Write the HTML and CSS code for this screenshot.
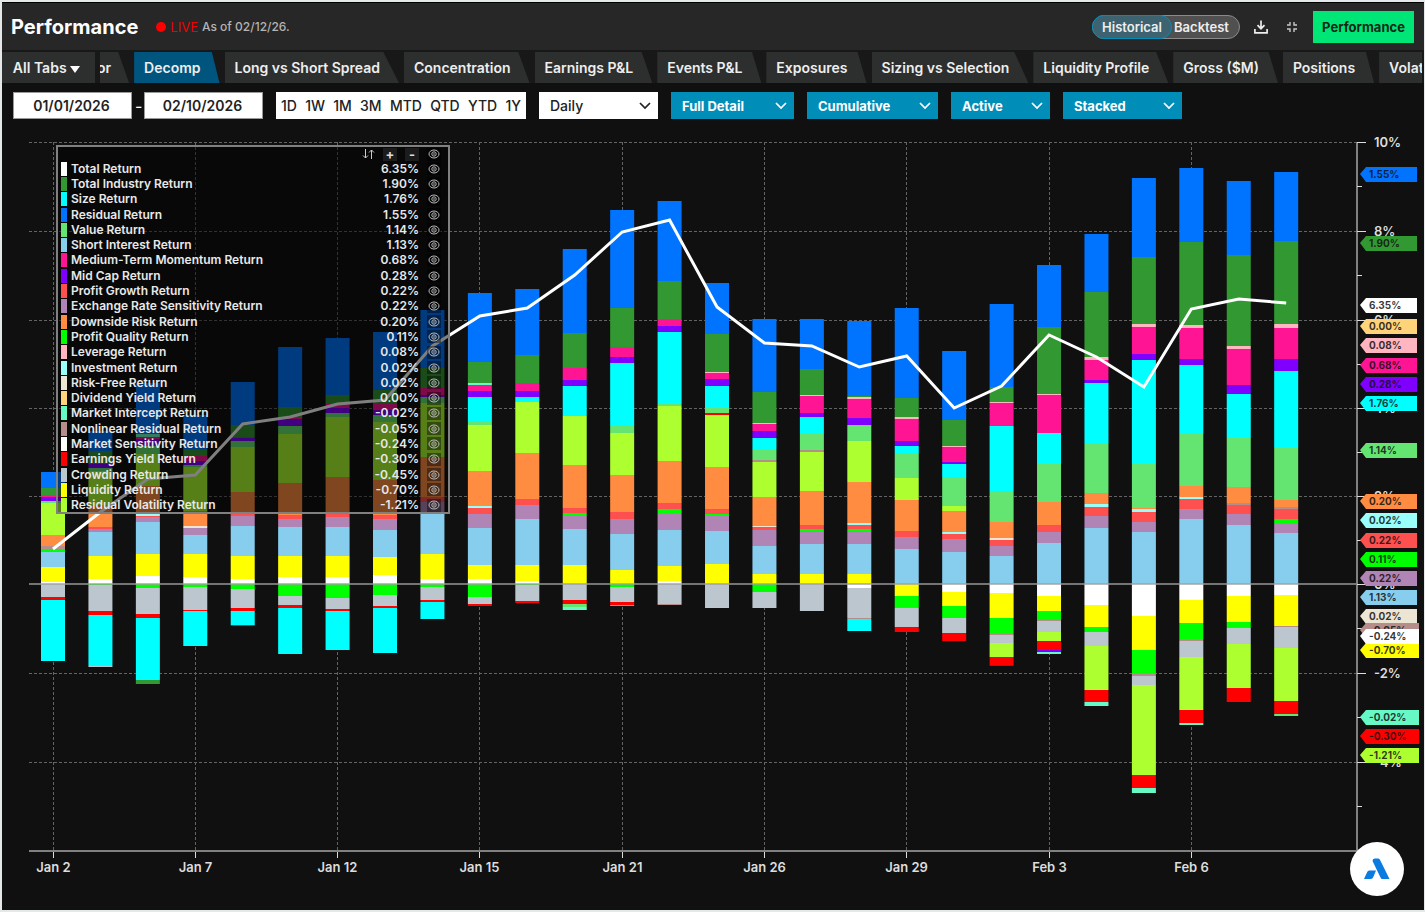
FILE: index.html
```html
<!DOCTYPE html>
<html lang="en">
<head>
    <meta charset="UTF-8">
    <meta name="viewport" content="width=device-width, initial-scale=1.0">
    <title>Performance</title>
    <link rel="stylesheet" href="styles.css">
</head>
<body>
    <div class="app">
        <header class="header">
            <h1>Performance</h1>
            <span class="live-dot"></span>
            <span class="live">LIVE</span>
            <span class="as-of">As of 02/12/26.</span>
            <div class="header-right">
                <div class="toggle">
                    <button class="toggle-on">Historical</button>
                    <button class="toggle-off">Backtest</button>
                </div>
                <button class="icon-btn" aria-label="Download">
                    <svg width="14" height="14" viewBox="0 0 14 14" fill="none" stroke="#eee" stroke-width="1.7"><path d="M7 0.500V8.500M3.500 5.200L7 8.700L10.500 5.200M0.900 9V12.800H13.100V9"/></svg>
                </button>
                <button class="icon-btn" aria-label="Collapse">
                    <svg width="12" height="12" viewBox="0 0 12 12" fill="none" stroke="#c8c8c8" stroke-width="1.400"><path d="M4 1V4H1M8 1V4H11M4 11V8H1M8 11V8H11"/></svg>
                </button>
                <button class="perf-btn">Performance</button>
            </div>
        </header>

        <nav class="tabs">
            <button class="all-tabs">All Tabs <svg width="10" height="7" viewBox="0 0 10 7"><path d="M0 0H10L5 7Z" fill="#fff"/></svg></button>
            <div class="tab-strip">
                <button class="tab tab-cut">or</button>
                <button class="tab active">Decomp</button>
                <button class="tab">Long vs Short Spread</button>
                <button class="tab">Concentration</button>
                <button class="tab">Earnings P&amp;L</button>
                <button class="tab">Events P&amp;L</button>
                <button class="tab">Exposures</button>
                <button class="tab">Sizing vs Selection</button>
                <button class="tab">Liquidity Profile</button>
                <button class="tab">Gross ($M)</button>
                <button class="tab">Positions</button>
                <button class="tab">Volatility</button>
            </div>
        </nav>

        <div class="controls">
            <div class="dates">
                <input type="text" class="date" value="01/01/2026" aria-label="Start date">
                <span>-</span>
                <input type="text" class="date" value="02/10/2026" aria-label="End date">
            </div>
            <div class="ranges">
                <button>1D</button>
                <button>1W</button>
                <button>1M</button>
                <button>3M</button>
                <button>MTD</button>
                <button>QTD</button>
                <button>YTD</button>
                <button>1Y</button>
            </div>
            <div class="select select-white">
                <select aria-label="Frequency"><option>Daily</option></select>
                <svg width="12" height="8" viewBox="0 0 12 8"><path d="M1 1L6 6L11 1"/></svg>
            </div>
            <div class="select select-detail">
                <select aria-label="Detail"><option>Full Detail</option></select>
                <svg width="12" height="8" viewBox="0 0 12 8"><path d="M1 1L6 6L11 1"/></svg>
            </div>
            <div class="select select-mode">
                <select aria-label="Mode"><option>Cumulative</option></select>
                <svg width="12" height="8" viewBox="0 0 12 8"><path d="M1 1L6 6L11 1"/></svg>
            </div>
            <div class="select select-active">
                <select aria-label="Return type"><option>Active</option></select>
                <svg width="12" height="8" viewBox="0 0 12 8"><path d="M1 1L6 6L11 1"/></svg>
            </div>
            <div class="select select-stack">
                <select aria-label="Chart type"><option>Stacked</option></select>
                <svg width="12" height="8" viewBox="0 0 12 8"><path d="M1 1L6 6L11 1"/></svg>
            </div>
        </div>

        <main class="chart">
            <svg id="plot" class="plot" viewBox="2 126 1422 784"></svg>
            <div class="legend">
                <table>
                    <thead>
                        <tr>
                            <th></th>
                            <th></th>
                            <th class="tools">
                                <button aria-label="Sort"><svg width="13" height="10" viewBox="0 0 13 10" fill="none" stroke="#ccc"><path d="M3.500 0V9M1 6.500L3.500 9L6 6.500M9.500 10V1M7 3.500L9.500 1L12 3.500"/></svg></button>
                                <button class="boxed">+</button>
                                <button class="boxed">-</button>
                            </th>
                            <th class="eye"><button aria-label="Toggle all"><svg><use href="#eye"/></svg></button></th>
                        </tr>
                    </thead>
                    <tbody id="legendRows"></tbody>
                </table>
            </div>
            <button class="fab" aria-label="Assistant">
                <svg width="28" height="22" viewBox="0 0 28 22"><path d="M10 4C9 1.500 10.500 0.500 12.500 0.500H14.500C16 0.500 16.700 1 17.200 2.200L26.500 21H20C18.500 21 18 20.500 17.500 19.500L10 4Z" fill="#0a7be0"/><path d="M1 21L4 14.500C4.600 13 5.500 12.500 7 12.500H13L10.500 18.500C9.800 20.300 9 21 7.500 21Z" fill="#0a7be0"/></svg>
            </button>
        </main>
    </div>

    <svg class="sprite">
        <symbol id="eye" viewBox="0 0 12 10">
            <ellipse cx="6" cy="5" rx="5" ry="4" fill="none" stroke="#bbb"/>
            <circle cx="6" cy="5" r="2.200" fill="none" stroke="#bbb"/>
            <circle cx="6" cy="5" r="0.700" fill="#ddd"/>
        </symbol>
    </svg>
    <script src="chart.js"></script>
</body>
</html>
```
FILE: styles.css
```css
* {
    box-sizing: border-box;
}
body {
    font-family: Inter, Roboto, sans-serif;
    margin: 0;
    background-color: #e4e8e8;
    color: #fff;
}
button, input, select {
    font-family: inherit;
    margin: 0;
    padding: 0;
    border: none;
    background: none;
    color: inherit;
    cursor: pointer;
}
.app {
    margin: 2px 1px 0 2px;
    background-color: #101010;
    overflow: hidden;
}

/* header */
.header {
    display: flex;
    align-items: center;
    height: 48px;
    padding: 0 10px 0 9px;
    background-color: #272727;
    border-top: 1px solid #000;
}
h1 {
    margin: 0;
    font-size: 20px;
    font-weight: 700;
}
.live-dot {
    width: 10px;
    height: 10px;
    margin: 0 4px 0 18px;
    border-radius: 50%;
    background-color: #f00;
}
.live {
    font-size: 13px;
    color: #f00000;
}
.as-of {
    margin-left: 4px;
    font-size: 12px;
    font-weight: 500;
    color: #b4b4b4;
}
.header-right {
    display: flex;
    align-items: center;
    margin-left: auto;
}
.toggle {
    display: flex;
    height: 24px;
    margin-right: 8px;
    border: 1px solid #8a8a8a;
    border-radius: 12px;
    background-color: #505050;
}
.toggle button {
    font-size: 13px;
    font-weight: 600;
    color: #eee;
}
.toggle .toggle-on {
    width: 80px;
    margin: -1px 0 -1px -1px;
    border: 1px solid #008db8;
    border-radius: 12px;
    background-color: #3d6270;
}
.toggle .toggle-off {
    width: 67px;
    padding-right: 8px;
}
.icon-btn {
    display: flex;
    align-items: center;
    justify-content: center;
    width: 26px;
    height: 24px;
    margin-right: 5px;
}
.perf-btn {
    height: 32px;
    width: 101px;
    margin-left: 3px;
    background-color: #00e676;
    color: #102818;
    font-size: 13px;
    font-weight: 700;
}

/* tabs */
.tabs {
    display: flex;
    gap: 5px;
    height: 33px;
    padding-top: 2px;
    background-color: #181818;
}
.all-tabs {
    flex: none;
    width: 93px;
    padding-right: 4px;
    background-color: #2d2f2f;
    font-size: 14px;
    font-weight: 600;
    color: #eee;
}
.tab-strip {
    display: flex;
    flex: 1;
    gap: 5px;
    min-width: 0;
    margin-right: 2px;
    overflow: hidden;
}
.tab {
    flex: none;
    padding: 0 19px 0 10px;
    background-color: #2d2f2f;
    clip-path: polygon(0 0, 91% 0, 100% 100%, 0 100%);
    font-size: 14px;
    font-weight: 600;
    color: #eee;
}
.tab.active {
    background-color: #00557f;
}
.tab-cut {
    margin-left: -3px;
    padding: 0 18px 0 0;
    clip-path: polygon(0 0, 66% 0, 100% 100%, 0 100%);
}

/* filters */
.controls {
    display: flex;
    gap: 13px;
    height: 43px;
    padding: 9px 11px 7px;
}
.dates {
    display: flex;
    align-items: center;
    gap: 3px;
}
.dates span {
    width: 6px;
    text-align: center;
}
.date {
    width: 119px;
    height: 27px;
    padding-right: 2px;
    border: 1px solid #999;
    background-color: #fff;
    color: #222;
    font-size: 14px;
    font-weight: 600;
    text-align: center;
}
.ranges {
    display: flex;
    align-items: center;
    justify-content: space-between;
    width: 250px;
    height: 27px;
    padding: 0 5px;
    background-color: #fff;
    color: #222;
}
.ranges button {
    font-size: 14px;
    font-weight: 500;
}
.select {
    position: relative;
    height: 27px;
    background-color: #008db8;
    color: #fff;
}
.select select {
    width: 100%;
    height: 100%;
    padding-left: 11px;
    appearance: none;
    font-size: 13px;
    font-weight: 700;
}
.select svg {
    position: absolute;
    right: 7px;
    top: 10px;
    fill: none;
    stroke: currentColor;
    stroke-width: 1.7;
    pointer-events: none;
}
.select-white {
    width: 119px;
    background-color: #fff;
    color: #222;
}
.select-white select {
    font-size: 14px;
    font-weight: 500;
}
.select-detail {
    width: 123px;
}
.select-mode {
    width: 131px;
}
.select-active {
    width: 99px;
}
.select-stack {
    width: 119px;
}

/* chart */
.chart {
    position: relative;
}
.plot {
    display: block;
    width: 100%;
    height: auto;
}
.grid {
    stroke: #646464;
    stroke-dasharray: 3 2;
}
.axis {
    stroke: #808080;
    stroke-width: 2;
}
.zero {
    stroke: #a0a0a0;
    stroke-width: 2;
    stroke-opacity: 0.7;
}
.tick {
    stroke: #ddd;
    stroke-width: 1;
}
.total {
    fill: none;
    stroke: #fff;
    stroke-width: 3;
}
.axis-text {
    fill: #ddd;
    font-size: 13px;
    font-weight: 600;
}
.tag-text {
    fill: #111;
    fill-opacity: 0.85;
    font-size: 10px;
    font-weight: 700;
}

/* legend */
.legend {
    position: absolute;
    left: 54px;
    top: 19px;
    width: 394px;
    height: 369px;
    border: 2px solid #808080;
    background-color: rgba(0, 0, 0, 0.5);
}
.legend table {
    width: 100%;
    height: 366px;
    border-collapse: collapse;
    font-size: 12px;
    font-weight: 600;
    line-height: 14px;
    color: #e8e8e8;
}
.legend th, .legend td {
    padding: 0;
    white-space: nowrap;
}
.legend .swatch {
    width: 13px;
    padding-left: 3px;
}
.swatch i {
    display: block;
    width: 6px;
    height: 14px;
}
.legend .value {
    text-align: right;
}
.legend .tools {
    display: flex;
    align-items: center;
    justify-content: flex-end;
    gap: 8px;
    height: 14px;
}
.tools button {
    display: flex;
    align-items: center;
    justify-content: center;
    width: 14px;
    height: 13px;
    font-size: 13px;
    color: #ddd;
}
.tools .boxed {
    background-color: #1c1c1c;
    font-weight: 700;
}
.legend .eye {
    width: 29px;
}
.eye button {
    display: flex;
    width: 14px;
    height: 13px;
    margin-left: 8px;
    align-items: center;
    justify-content: center;
    background-color: rgba(0, 0, 0, 0.4);
}
.eye svg {
    width: 12px;
    height: 10px;
}
.fab {
    position: absolute;
    right: 20px;
    bottom: 14px;
    display: flex;
    align-items: center;
    justify-content: center;
    width: 54px;
    height: 54px;
    border-radius: 50%;
    background-color: #fff;
}
.sprite {
    position: absolute;
    width: 0;
    height: 0;
}
```
FILE: chart.js
```js
// one letter per return series
var series = {
    T: ['Total Return', '6.35%', '#ffffff'],
    G: ['Total Industry Return', '1.90%', '#329932'],
    C: ['Size Return', '1.76%', '#00ffff'],
    B: ['Residual Return', '1.55%', '#0074ff'],
    V: ['Value Return', '1.14%', '#64e572'],
    S: ['Short Interest Return', '1.13%', '#87ceee'],
    M: ['Medium-Term Momentum Return', '0.68%', '#ff1493'],
    P: ['Mid Cap Return', '0.28%', '#8000ff'],
    R: ['Profit Growth Return', '0.22%', '#ff5050'],
    X: ['Exchange Rate Sensitivity Return', '0.22%', '#b084b4'],
    O: ['Downside Risk Return', '0.20%', '#ff8c40'],
    Q: ['Profit Quality Return', '0.11%', '#00ff00'],
    L: ['Leverage Return', '0.08%', '#ffb6c1'],
    I: ['Investment Return', '0.02%', '#98fffa'],
    F: ['Risk-Free Return', '0.02%', '#ece5d3'],
    D: ['Dividend Yield Return', '0.00%', '#ffd37a'],
    N: ['Market Intercept Return', '-0.02%', '#66f9c5'],
    K: ['Nonlinear Residual Return', '-0.05%', '#b58d8a'],
    W: ['Market Sensitivity Return', '-0.24%', '#ffffff'],
    E: ['Earnings Yield Return', '-0.30%', '#ff0000'],
    H: ['Crowding Return', '-0.45%', '#bbc6ce'],
    Y: ['Liquidity Return', '-0.70%', '#ffff00'],
    A: ['Residual Volatility Return', '-1.21%', '#adff2f']
};

// each bar: top of the stack, then series letter + bottom edge going down
var bars = [
    '472 B488 G495 M497 P501 V503 A535 O546 K549 Q552 S567 Y582 W584 H597 E600 C661',
    '431 B451 G463 M464 P468 V471 A505 O527 R529 X532 S556 Y579 W584 Q585 H611 E615 C666 H667',
    '383 B434 N437 M439 P446 V454 A486 O513 I516 R517 X522 S554 Y576 W584 Q588 H614 E618 C680 G684',
    '415 B449 G456 M461 P465 V467 A511 O526 F528 X535 S554 Y577 W584 Q587 H610 E611 C646',
    '382 B425 G437 M438 P441 V447 A492 O513 R516 X526 S556 Y579 W584 Q589 H608 E611 C625 E626',
    '347 B407 G418 M419 P426 V434 A483 O515 R519 X527 S556 Y577 W584 Q596 H605 E608 C654',
    '338 B395 G404 M408 P413 V417 A477 O513 R517 X527 S556 Y577 W584 Q598 H609 E611 C650',
    '332 B390 G403 M410 P415 V422 A480 O515 R519 X530 S557 Y575 W584 Q595 H606 E608 C653',
    '310 B368 G388 M395 P397 V403 A457 O497 R502 X513 S554 Y579 W584 Q587 H600 E602 C619',
    '293 B362 G383 N385 M391 P397 C421 V425 A471 O506 I508 R514 X528 S565 Y579 W584 Q597 H604 E606',
    '289 B355 G383 M391 P397 C402 A453 O499 R505 X519 S565 Y581 W584 Q585 H601 E603',
    '249 B333 G368 M380 P386 C416 A465 O508 R513 Q515 X529 S565 Y584 H600 E604 V607 N610',
    '210 B308 G347 M357 P363 C426 V433 A475 O512 R519 X534 S570 Y584 Q587 H602 E605 K606',
    '201 B281 G319 M326 P332 C404 V406 A461 O503 R509 Q514 X530 S566 Y581 W584 H604 K605',
    '283 B334 G372 L373 M379 P386 C408 V413 E415 A467 O509 R514 Q515 X531 S564 Y584 H607 N608',
    '319 B392 G423 L424 M431 P438 C450 V460 K462 A497 O526 F527 R530 X546 S574 Y584 Q592 H608',
    '319 B369 G395 L396 M413 P417 C434 V450 K452 A491 O525 R529 Q532 X544 S574 Y584 H611',
    '321 B396 G397 L399 M418 P425 V441 A482 O523 I525 R529 Q532 X544 S574 Y584 W588 H618 K619 C631',
    '308 B398 G417 L419 M441 P446 C453 V478 A500 O531 R537 X549 S584 Y596 Q607 K608 H627 E632',
    '351 B420 G446 L447 M462 P464 C477 V506 A511 O532 I534 R539 X552 S584 W592 Y606 Q618 H633 E641',
    '304 B387 G402 L403 M426 C491 V522 O538 F540 R546 X556 S584 W593 Y618 Q634 K635 H643 A657 E665 P666',
    '265 B327 G394 L395 M433 C464 V502 O525 R532 X543 S584 W596 Y611 Q620 K621 H632 A641 E650 P652 N654',
    '234 B292 G357 L360 M380 P383 C444 V493 O504 I507 R516 X528 S584 W605 Y627 Q632 H646 A690 E702 N706',
    '178 B257 G324 L327 M354 P360 C464 V508 O509 I512 R522 X532 S584 W616 Y650 Q674 K676 H685 A775 E788 N793',
    '168 B242 G325 L328 M359 P365 C434 V486 O497 I499 R509 X519 S584 W600 Y623 Q639 K641 H657 A710 E723 N725',
    '181 B255 G346 L349 M385 P394 C438 V487 O503 K505 R514 X525 S584 W596 Y622 Q627 K628 H644 A688 E702',
    '172 B241 G324 L328 M359 P371 C448 V500 O507 K509 R519 Q523 X533 S584 W595 Y626 K627 H648 A701 E714 V716'
];

var total = [549, 512, 479, 475, 424, 417, 404, 400, 346, 316, 308, 275, 232, 220, 307,
    343, 346, 367, 356, 408, 386, 335, 357, 387, 309, 299, 303];
var days = ['Jan 2', 'Jan 7', 'Jan 12', 'Jan 15', 'Jan 21', 'Jan 26', 'Jan 29', 'Feb 3', 'Feb 6'];
var levels = [[142, '10%'], [231, '8%'], [320, '6%'], [408, '4%'], [496, '2%'], [584, '0%'], [673, '-2%'], [762, '-4%']];

// value tags on the right axis, later ones are drawn on top
var tags = [['B', 174], ['G', 243], ['T', 305], ['D', 326], ['L', 345], ['M', 365], ['P', 384], ['C', 403],
    ['V', 450], ['O', 501], ['I', 520], ['R', 540], ['Q', 559], ['X', 578], ['S', 597], ['F', 616],
    ['Y', 650], ['K', 630], ['W', 636], ['N', 717], ['E', 736], ['A', 755]];

function barX(i) {
    return 53 + i * 47.43;
}

function line(cls, x1, y1, x2, y2) {
    return '<line class="' + cls + '" x1="' + x1 + '" y1="' + y1 + '" x2="' + x2 + '" y2="' + y2 + '"/>';
}

function drawPlot() {
    var out = '';

    // grid
    levels.forEach(function (l) {
        if (l[1] !== '0%') {
            out += line('grid', 29, l[0] + 0.5, 1357, l[0] + 0.5);
        }
    });
    days.forEach(function (d, i) {
        var x = Math.floor(barX(i * 3)) + 0.5;
        out += line('grid', x, 142, x, 850);
        out += line('tick', x, 850, x, 858);
        out += '<text class="axis-text" text-anchor="middle" x="' + x + '" y="872">' + d + '</text>';
    });

    // stacked bars
    bars.forEach(function (b, i) {
        var parts = b.split(' ');
        var y = Number(parts[0]);
        parts.slice(1).forEach(function (p) {
            var bottom = Number(p.slice(1));
            out += '<rect x="' + (barX(i) - 12) + '" y="' + y + '" width="24" height="' + (bottom - y) + '" fill="' + series[p[0]][2] + '"/>';
            y = bottom;
        });
    });

    out += line('zero', 29, 584, 1357, 584);
    out += line('axis', 29, 851, 1358, 851);
    out += line('axis', 1357, 142, 1357, 852);

    // total return line
    out += '<polyline class="total" points="' + total.map(function (y, i) {
        return barX(i) + ',' + y;
    }).join(' ') + '"/>';

    // right axis
    levels.forEach(function (l) {
        out += line('tick', 1357, l[0] + 0.5, 1366, l[0] + 0.5);
        out += line('tick', 1357, l[0] + 44.5, 1362, l[0] + 44.5);
        out += '<text class="axis-text" x="1374" y="' + (l[0] + 5) + '">' + l[1] + '</text>';
    });
    tags.forEach(function (t) {
        var s = series[t[0]];
        var right = s[1][0] === '-' ? 1419 : 1417;
        var y = t[1];
        out += '<path d="M1360 ' + y + 'L1366 ' + (y - 7) + 'H' + right + 'V' + (y + 8) + 'H1366Z" fill="' + s[2] + '"/>';
        out += '<text class="tag-text" x="1369" y="' + (y + 4) + '">' + s[1] + '</text>';
    });

    document.getElementById('plot').innerHTML = out;
}

function drawLegend() {
    var rows = '';
    Object.keys(series).forEach(function (k) {
        var s = series[k];
        rows += '<tr><td class="swatch"><i style="background-color: ' + s[2] + '"></i></td>' +
            '<td>' + s[0] + '</td><td class="value">' + s[1] + '</td>' +
            '<td class="eye"><button aria-label="Toggle ' + s[0] + '"><svg><use href="#eye"/></svg></button></td></tr>';
    });
    document.getElementById('legendRows').innerHTML = rows;
}

drawPlot();
drawLegend();
```
